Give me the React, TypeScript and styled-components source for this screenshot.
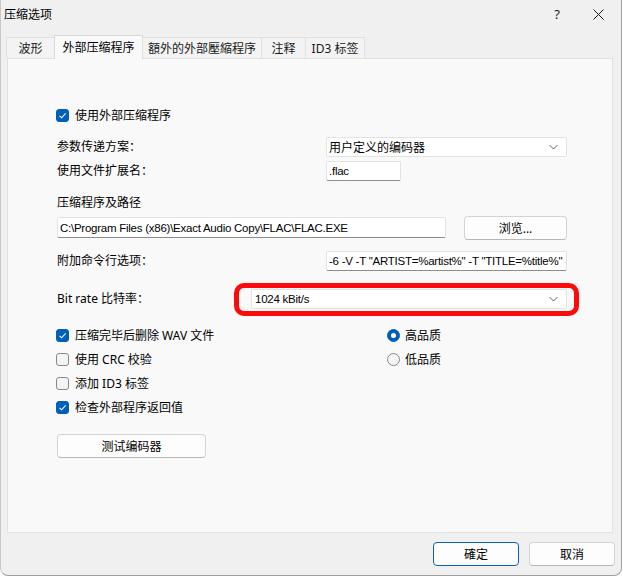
import React from "react";
import styled, { createGlobalStyle, css } from "styled-components";

const GlobalStyle = createGlobalStyle`
  html, body { margin: 0; padding: 0; }
  body {
    width: 623px;
    height: 576px;
    overflow: hidden;
    background: #ffffff;
    font-family: "Noto Sans", "Noto Sans CJK SC", sans-serif;
    font-size: 12px;
    color: #000;
  }
  * { box-sizing: border-box; }
`;

const Window = styled.div`
  width: 622px;
  height: 576px;
  background: #f0f0f0;
  border-right: 1px solid #9e9e9e;
  border-bottom: 1px solid #9e9e9e;
  border-left: 1px solid #c8c8c8;
  border-radius: 0 0 8px 8px;
  display: flex;
  flex-direction: column;
  overflow: hidden;
`;

const TitleBar = styled.div`
  height: 28px;
  display: flex;
  align-items: center;
  padding-left: 3px;
  flex-shrink: 0;
`;

const Title = styled.span`
  font-size: 12px;
  flex: 1;
`;

const TitleButton = styled.span<{ $w: number }>`
  width: ${(p) => p.$w}px;
  flex-shrink: 0;
  display: flex;
  align-items: center;
  justify-content: center;
  font-size: 13px;
  color: #1a1a1a;
`;

const TabStrip = styled.div`
  height: 30px;
  display: flex;
  align-items: flex-end;
  padding-left: 6px;
  flex-shrink: 0;
  position: relative;
  z-index: 1;
`;

const Tab = styled.div<{ $w: number; $active?: boolean }>`
  width: ${(p) => p.$w}px;
  height: 21px;
  display: flex;
  align-items: center;
  justify-content: center;
  font-size: 12px;
  background: #f3f3f3;
  border: 1px solid #e0e0e0;
  border-bottom: none;
  margin-left: -1px;
  color: #1a1a1a;
  ${(p) =>
    p.$active &&
    css`
      height: 24px;
      background: #f9f9f9;
      border-color: #d9d9d9;
      margin-bottom: -1px;
      padding-bottom: 2px;
      color: #000;
    `}
`;

const Panel = styled.div`
  flex: 1;
  margin: 0 8px 0 6px;
  background: #f9f9f9;
  border: 1px solid #e1e1e1;
  padding: 46px 45px 0 49px;
  display: flex;
  flex-direction: column;
`;

const Block = styled.div<{ $mt: number }>`
  margin-top: ${(p) => p.$mt}px;
`;

const FormRow = styled(Block)`
  display: grid;
  grid-template-columns: 269px 241px;
  align-items: center;
  height: 20px;
`;

const Label = styled.span`
  font-size: 12px;
  white-space: nowrap;
  line-height: 16px;
`;

const SectionLabel = styled(Block)`
  height: 16px;
  line-height: 16px;
  font-size: 12px;
`;

const Latin = styled.span`
  font-family: "Liberation Sans", "Noto Sans", sans-serif;
  font-size: 11.5px;
  letter-spacing: -0.25px;
`;

const fieldBase = css`
  height: 20px;
  background: #ffffff;
  border: 1px solid #e2e2e2;
  border-bottom-color: #8c8c8c;
  border-radius: 2px;
  display: flex;
  align-items: center;
  font-size: 12px;
  white-space: nowrap;
  overflow: hidden;
`;

const TextBox = styled.div<{ $w?: number; $h?: number }>`
  ${fieldBase};
  width: ${(p) => (p.$w ? `${p.$w}px` : "100%")};
  height: ${(p) => p.$h ?? 20}px;
  padding-left: 2px;
`;

const SelectBox = styled.div<{ $w?: number; $pl?: number }>`
  ${fieldBase};
  border-bottom-color: #e2e2e2;
  width: ${(p) => (p.$w ? `${p.$w}px` : "100%")};
  padding: 0 8px 0 ${(p) => p.$pl ?? 2}px;
  justify-content: space-between;
  position: relative;
  overflow: visible;
`;

const Chevron = () => (
  <svg width="9" height="6" viewBox="0 0 9 6">
    <polyline points="0.5,1 4.5,5 8.5,1" fill="none" stroke="#606060" strokeWidth="1" />
  </svg>
);

const PathRow = styled(Block)`
  display: flex;
  align-items: center;
  gap: 18px;
  height: 23px;
`;

const Button = styled.div<{ $w: number; $primary?: boolean }>`
  width: ${(p) => p.$w}px;
  height: 24px;
  background: #fdfdfd;
  border: 1px solid #d3d3d3;
  border-bottom-color: #b8b8b8;
  border-radius: 4px;
  display: flex;
  align-items: center;
  justify-content: center;
  font-size: 12px;
  color: #000;
  ${(p) =>
    p.$primary &&
    css`
      border: 1px solid #0a64b4;
    `}
`;

const BitRow = styled(Block)`
  display: flex;
  align-items: center;
  height: 20px;
`;

const BitLabel = styled(Label)`
  width: 194px;
`;

const Highlight = styled.div`
  position: absolute;
  left: -18px;
  right: -13px;
  top: -7px;
  bottom: -8px;
  border: 5px solid #ff0a0a;
  border-radius: 10px;
  pointer-events: none;
`;

const Options = styled(Block)`
  display: grid;
  grid-template-columns: 331px 1fr;
  grid-auto-rows: 24px;
  margin-left: -1px;
`;

const OptionItem = styled.div<{ $gap: number; $h?: number }>`
  display: flex;
  align-items: center;
  gap: ${(p) => p.$gap}px;
  height: ${(p) => (p.$h ? `${p.$h}px` : "auto")};
  font-size: 12px;
  white-space: nowrap;
`;

const TopOption = styled(OptionItem)`
  margin-left: -1px;
`;

const Box = styled.span<{ $checked?: boolean }>`
  width: 13px;
  height: 13px;
  border-radius: 3px;
  display: flex;
  align-items: center;
  justify-content: center;
  background: ${(p) => (p.$checked ? "#005fb8" : "#f4f4f4")};
  border: 1px solid ${(p) => (p.$checked ? "#005fb8" : "#8a8a8a")};
`;

const Radio = styled.span<{ $checked?: boolean }>`
  width: 13px;
  height: 13px;
  border-radius: 50%;
  display: flex;
  align-items: center;
  justify-content: center;
  background: ${(p) => (p.$checked ? "#005fb8" : "#f4f4f4")};
  border: 1px solid ${(p) => (p.$checked ? "#005fb8" : "#8a8a8a")};
  &::after {
    content: "";
    display: ${(p) => (p.$checked ? "block" : "none")};
    width: 5px;
    height: 5px;
    border-radius: 50%;
    background: #fff;
  }
`;

const Footer = styled.div`
  height: 42px;
  flex-shrink: 0;
  display: flex;
  justify-content: flex-end;
  align-items: flex-start;
  padding: 9px 6px 0 0;
  gap: 10px;
`;

const Check = ({ checked }: { checked?: boolean }) => (
  <Box $checked={checked}>
    {checked && (
      <svg width="9" height="9" viewBox="0 0 9 9">
        <polyline points="1.5,4.8 3.6,6.8 7.6,2.4" fill="none" stroke="#fff" strokeWidth="1.1" />
      </svg>
    )}
  </Box>
);

const CloseIcon = () => (
  <svg width="11" height="11" viewBox="0 0 11 11">
    <path d="M0.5 0.5 L10.5 10.5 M10.5 0.5 L0.5 10.5" stroke="#1a1a1a" strokeWidth="1" />
  </svg>
);

const args =
  '-6 -V -T "ARTIST=%artist%" -T "TITLE=%title%" -T "ALBUM=%albumtitle%" -T "DATE=%year%" %source% -o %dest%';

export default function App() {
  return (
    <>
      <GlobalStyle />
      <Window>
        <TitleBar>
          <Title>压缩选项</Title>
          <TitleButton $w={36}>?</TitleButton>
          <TitleButton $w={46}>
            <CloseIcon />
          </TitleButton>
        </TitleBar>
        <TabStrip>
          <Tab $w={49}>波形</Tab>
          <Tab $w={89} $active>
            外部压缩程序
          </Tab>
          <Tab $w={120}>額外的外部壓縮程序</Tab>
          <Tab $w={45}>注释</Tab>
          <Tab $w={60}>ID3 标签</Tab>
        </TabStrip>
        <Panel>
          <TopOption $gap={6} $h={20}>
            <Check checked />
            使用外部压缩程序
          </TopOption>
          <FormRow $mt={12}>
            <Label>参数传递方案：</Label>
            <SelectBox>
              <span>用户定义的编码器</span>
              <Chevron />
            </SelectBox>
          </FormRow>
          <FormRow $mt={4}>
            <Label>使用文件扩展名：</Label>
            <TextBox $w={75}>
              <Latin>.flac</Latin>
            </TextBox>
          </FormRow>
          <SectionLabel $mt={14}>压缩程序及路径</SectionLabel>
          <PathRow $mt={5}>
            <TextBox $w={389} $h={21}>
              <Latin>C:\Program Files (x86)\Exact Audio Copy\FLAC\FLAC.EXE</Latin>
            </TextBox>
            <Button $w={103}>浏览...</Button>
          </PathRow>
          <FormRow $mt={12}>
            <Label>附加命令行选项：</Label>
            <TextBox>
              <Latin>{args}</Latin>
            </TextBox>
          </FormRow>
          <BitRow $mt={18}>
            <BitLabel>Bit rate 比特率：</BitLabel>
            <SelectBox $w={316} $pl={3}>
              <Latin>1024 kBit/s</Latin>
              <Chevron />
              <Highlight />
            </SelectBox>
          </BitRow>
          <Options $mt={14}>
            <OptionItem $gap={6}>
              <Check checked />
              压缩完毕后删除 WAV 文件
            </OptionItem>
            <OptionItem $gap={5}>
              <Radio $checked />
              高品质
            </OptionItem>
            <OptionItem $gap={6}>
              <Check />
              使用 CRC 校验
            </OptionItem>
            <OptionItem $gap={5}>
              <Radio />
              低品质
            </OptionItem>
            <OptionItem $gap={6}>
              <Check />
              添加 ID3 标签
            </OptionItem>
            <span />
            <OptionItem $gap={6}>
              <Check checked />
              检查外部程序返回值
            </OptionItem>
          </Options>
          <Block $mt={15}>
            <Button $w={149}>测试编码器</Button>
          </Block>
        </Panel>
        <Footer>
          <Button $w={86} $primary>
            確定
          </Button>
          <Button $w={86}>取消</Button>
        </Footer>
      </Window>
    </>
  );
}
